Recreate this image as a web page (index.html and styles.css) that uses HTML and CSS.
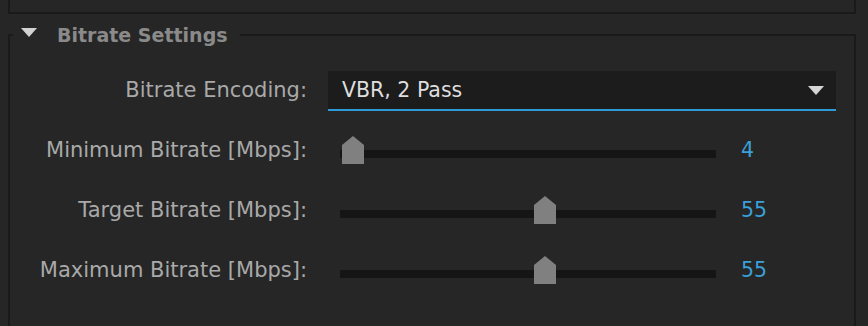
FILE: index.html
```html
<!DOCTYPE html>
<html>
<head>
<meta charset="utf-8">
<link rel="stylesheet" href="styles.css">
</head>
<body>
<div class="top-box"></div>
<div class="section">
  <div class="section-head">
    <div class="seg"></div>
    <svg class="disclosure" width="16" height="9" viewBox="0 0 16 9"><polygon points="0,0 16,0 8,9" fill="#d2d2d2"/></svg>
    <div class="title">Bitrate Settings</div>
    <div class="line"></div>
  </div>
  <div class="rows">
    <div class="row">
      <div class="label">Bitrate Encoding:</div>
      <div class="dropdown">
        <span class="dd-text">VBR, 2 Pass</span>
        <svg class="dd-arrow" width="16" height="9" viewBox="0 0 16 9"><polygon points="0,0 16,0 8,9" fill="#d6d6d6"/></svg>
      </div>
    </div>
    <div class="row">
      <div class="label">Minimum Bitrate [Mbps]:</div>
      <div class="control">
        <div class="slider"><div class="track"></div><div class="thumb" style="left:2px"></div></div>
        <div class="value">4</div>
      </div>
    </div>
    <div class="row">
      <div class="label">Target Bitrate [Mbps]:</div>
      <div class="control">
        <div class="slider"><div class="track"></div><div class="thumb" style="left:194px"></div></div>
        <div class="value">55</div>
      </div>
    </div>
    <div class="row">
      <div class="label">Maximum Bitrate [Mbps]:</div>
      <div class="control">
        <div class="slider"><div class="track"></div><div class="thumb" style="left:194px"></div></div>
        <div class="value">55</div>
      </div>
    </div>
  </div>
</div>
</body>
</html>
```

FILE: styles.css
```css
html, body {
  margin: 0;
  padding: 0;
  background: #262626;
  overflow: hidden;
}
body {
  font-family: "DejaVu Sans", "Liberation Sans", sans-serif;
  width: 868px;
  height: 326px;
}
.top-box {
  margin-left: 8px;
  width: 848px;
  height: 14px;
  box-sizing: border-box;
  border: 2px solid #1a1a1a;
  border-top: none;
}
.section {
  display: flex;
  flex-direction: column;
  margin: 20px 0 0 8px;
  width: 848px;
  height: 292px;
  box-sizing: border-box;
  border-left: 2px solid #1a1a1a;
  border-right: 2px solid #1a1a1a;
}
.section-head {
  display: flex;
  align-items: center;
  height: 22px;
  margin: -10px -2px 0 -2px;
}
.seg {
  width: 5px;
  height: 2px;
  background: #1a1a1a;
}
.disclosure {
  display: block;
  align-self: flex-start;
  margin: 4px 0 0 8px;
}
.title {
  margin-left: 20px;
  font-size: 19px;
  font-weight: bold;
  line-height: 22px;
  color: #8a8a8a;
  white-space: nowrap;
}
.line {
  flex: 1;
  height: 2px;
  margin-left: 12px;
  background: #1a1a1a;
}
.rows {
  padding-top: 14px;
}
.row {
  display: grid;
  grid-template-columns: 297px 1fr;
  column-gap: 21px;
  align-items: center;
  height: 60px;
}
.label {
  text-align: right;
  font-size: 21px;
  color: #a9a9a9;
  white-space: nowrap;
}
.dropdown {
  display: flex;
  align-items: center;
  width: 508px;
  height: 38px;
  box-sizing: content-box;
  background: #1c1c1c;
  border-bottom: 2px solid #2e9bd7;
  margin-top: 2px;
}
.dd-text {
  padding-left: 14px;
  font-size: 20.5px;
  color: #dedede;
  white-space: nowrap;
}
.dd-arrow {
  display: block;
  margin-left: auto;
  margin-right: 12px;
}
.control {
  display: flex;
  align-items: center;
  padding-left: 12px;
}
.slider {
  position: relative;
  width: 376px;
  height: 28px;
}
.track {
  margin-top: 14px;
  height: 8px;
  background: #151515;
}
.thumb {
  position: absolute;
  top: 0;
  width: 22px;
  height: 28px;
  background: #808080;
  clip-path: polygon(50% 0, 100% 9px, 100% 100%, 0 100%, 0 9px);
}
.value {
  margin-left: 25px;
  font-size: 20.5px;
  color: #3aa0d8;
}
```
